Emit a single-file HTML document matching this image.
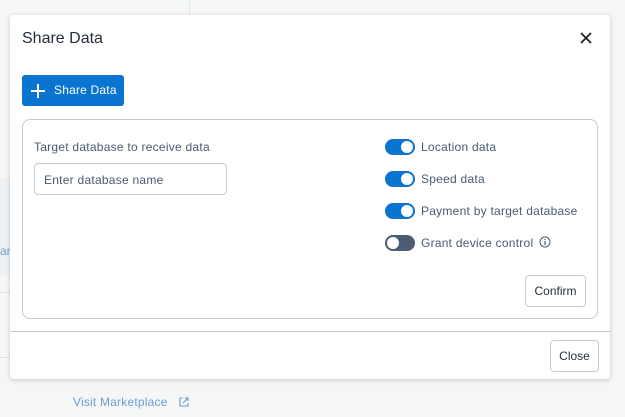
<!DOCTYPE html>
<html><head><style>
*{box-sizing:border-box;margin:0;padding:0}
body{width:625px;height:417px;background:#f5f7f7;font-family:"Liberation Sans",sans-serif;position:relative;overflow:hidden}
.abs{position:absolute;white-space:nowrap}
.modal{left:10px;top:15px;width:600px;height:364px;background:#fff;border-radius:4px;box-shadow:0 1px 5px rgba(0,0,0,.2)}
.tog{position:absolute;left:385px;width:30px;height:16px;border-radius:8px;background:#0a74d1}
.tog::after{content:"";position:absolute;top:2px;right:2px;width:12px;height:12px;border-radius:50%;background:#fff}
.tog.off{background:#4a5d73}
.tog.off::after{right:auto;left:2px}
.lbl{position:absolute;left:421px;font-size:12px;color:#4a5b6e;letter-spacing:0.25px;white-space:nowrap}
.btn{position:absolute;border:1px solid #c4cbd4;border-radius:4px;background:#fff;font-size:12px;color:#25303c;text-align:center}
</style></head><body>
<div class="abs" style="left:189px;top:0;width:1px;height:15px;background:#e2e6ea"></div>
<div class="abs" style="left:0;top:178px;width:10px;height:98px;background:#eef1f4"></div>
<div class="abs" style="left:0;top:244px;font-size:12px;color:#6a9fd0">ar</div>
<div class="abs" style="left:0;top:292px;width:10px;height:1px;background:#dde2e7"></div>
<div class="abs" style="left:0;top:357px;width:10px;height:1px;background:#dde2e7"></div>
<div class="modal abs">
<div class="abs" style="left:12px;top:15px;font-size:16px;color:#25303c">Share Data</div>
<svg class="abs" style="left:570px;top:17px" width="12" height="12" viewBox="0 0 12 12"><path d="M1 1L11 11M11 1L1 11" stroke="#222" stroke-width="1.8"/></svg>
<div class="abs" style="left:12px;top:60px;width:102px;height:31px;background:#0a74d1;border-radius:3px;color:#fff;font-size:12px;line-height:31px;padding-left:32px;letter-spacing:0.2px">Share Data</div>
<svg class="abs" style="left:20px;top:68px" width="16" height="16" viewBox="0 0 16 16"><path d="M8 1V15M1 8H15" stroke="#fff" stroke-width="2"/></svg>
<div class="abs" style="left:12px;top:104px;width:576px;height:200px;border:1px solid #c4cbd4;border-radius:8px"></div>
<div class="abs" style="left:0;top:316px;width:600px;height:1px;background:#c4cbd4"></div>
</div>
<div class="abs" style="left:34px;top:140px;font-size:12px;color:#4a5b6e;letter-spacing:0.25px">Target database to receive data</div>
<div class="abs" style="left:34px;top:163px;width:193px;height:32px;border:1px solid #c4cbd4;border-radius:4px;font-size:12px;color:#4a5b6e;padding:9px 0 0 9px;letter-spacing:0.25px">Enter database name</div>
<div class="tog" style="top:139px"></div><div class="lbl" style="top:140px">Location data</div>
<div class="tog" style="top:171px"></div><div class="lbl" style="top:172px">Speed data</div>
<div class="tog" style="top:203px"></div><div class="lbl" style="top:204px">Payment by target database</div>
<div class="tog off" style="top:235px"></div><div class="lbl" style="top:236px">Grant device control</div>
<svg class="abs" style="left:539px;top:236px" width="12" height="12" viewBox="0 0 12 12"><circle cx="6" cy="6" r="5" fill="none" stroke="#4a5b6e" stroke-width="1"/><path d="M6 5V9M6 3V4" stroke="#4a5b6e" stroke-width="1.2"/></svg>
<div class="btn" style="left:525px;top:275px;width:61px;height:32px;line-height:30px">Confirm</div>
<div class="btn" style="left:550px;top:340px;width:49px;height:32px;line-height:30px">Close</div>
<div class="abs" style="left:73px;top:395px;font-size:12px;color:#6a9fd0;letter-spacing:0.2px">Visit Marketplace</div>
<svg class="abs" style="left:178px;top:396px" width="12" height="12" viewBox="0 0 12 12"><path d="M5 2H2V10H10V7M7 2H10V5M10 2L5 7" fill="none" stroke="#6a9fd0" stroke-width="1.1"/></svg>
</body></html>
